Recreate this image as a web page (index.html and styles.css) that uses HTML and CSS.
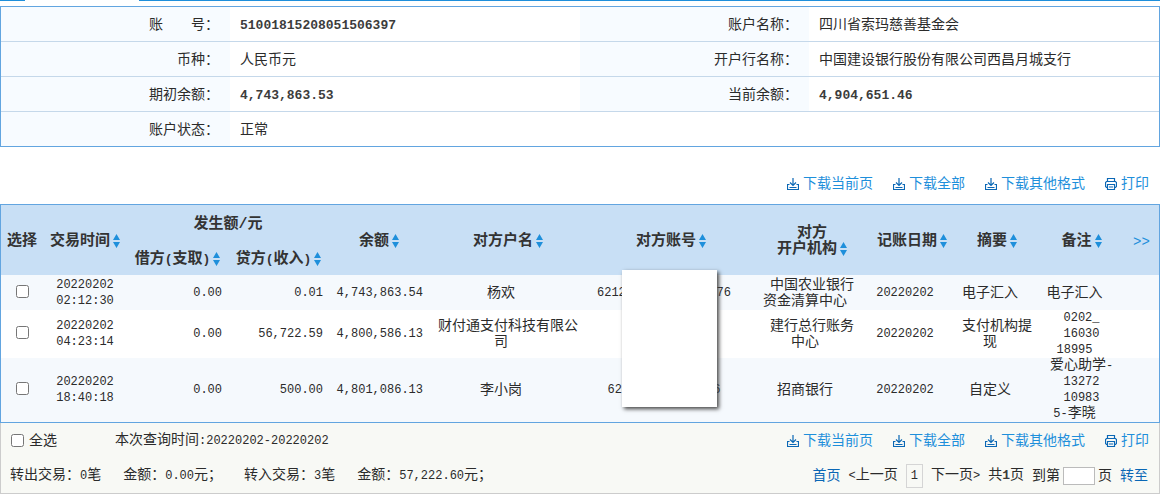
FILE: index.html
```html
<!DOCTYPE html>
<html lang="zh-CN">
<head>
<meta charset="utf-8">
<title>账户明细</title>
<link rel="stylesheet" href="styles.css">
</head>
<body>
<svg class="defs" aria-hidden="true">
  <symbol id="sort" viewBox="0 0 7 14"><path d="M3.500 0L7 6H0zM0 8h7L3.500 14z" fill="#1e8fdb"/></symbol>
  <symbol id="down" viewBox="0 0 12 12"><path d="M6 0v7.500M3 4.500l3 3 3-3M2.500 6.500h-2v5h11v-5h-2M2.500 9.500h7" fill="none" stroke="#0a67b5" stroke-width="1.200"/></symbol>
  <symbol id="print" viewBox="0 0 12 12"><path d="M2.500 3.500v-3h7v3M2.500 9.500h-1l-1-1v-4l1-1h9l1 1v4l-1 1h-1M2.500 6.500h7v5h-7zM4 9h4" fill="none" stroke="#0a67b5" stroke-width="1.200"/></symbol>
</svg>

<div class="tabline"><span class="tabline-start"></span><span class="tabline-rest"></span></div>

<table class="info">
  <colgroup><col class="c-label"><col class="c-value"><col class="c-label"><col class="c-value"></colgroup>
  <tr><th>账&#12288;&#12288;号：</th><td><b>51001815208051506397</b></td><th>账户名称：</th><td>四川省索玛慈善基金会</td></tr>
  <tr><th>币种：</th><td>人民币元</td><th>开户行名称：</th><td>中国建设银行股份有限公司西昌月城支行</td></tr>
  <tr><th>期初余额：</th><td><b>4,743,863.53</b></td><th>当前余额：</th><td><b>4,904,651.46</b></td></tr>
  <tr><th>账户状态：</th><td colspan="3">正常</td></tr>
</table>

<nav class="tools tools-top">
  <a href="#"><svg><use href="#down"/></svg>下载当前页</a>
  <a href="#"><svg><use href="#down"/></svg>下载全部</a>
  <a href="#"><svg><use href="#down"/></svg>下载其他格式</a>
  <a href="#"><svg><use href="#print"/></svg>打印</a>
</nav>

<table class="ledger">
  <colgroup><col class="w-pick"><col class="w-time"><col class="w-amount"><col class="w-amount"><col class="w-balance"><col class="w-name"><col class="w-account"><col class="w-bank"><col class="w-date"><col class="w-brief"><col class="w-note"><col class="w-more"></colgroup>
  <thead>
    <tr>
      <th rowspan="2">选择</th>
      <th rowspan="2"><button>交易时间<svg><use href="#sort"/></svg></button></th>
      <th colspan="2">发生额/元</th>
      <th rowspan="2"><button>余额<svg><use href="#sort"/></svg></button></th>
      <th rowspan="2"><button>对方户名<svg><use href="#sort"/></svg></button></th>
      <th rowspan="2"><button>对方账号<svg><use href="#sort"/></svg></button></th>
      <th rowspan="2">对方<br><button>开户机构<svg><use href="#sort"/></svg></button></th>
      <th rowspan="2"><button>记账日期<svg><use href="#sort"/></svg></button></th>
      <th rowspan="2"><button>摘要<svg><use href="#sort"/></svg></button></th>
      <th rowspan="2"><button>备注<svg><use href="#sort"/></svg></button></th>
      <th rowspan="2"><button class="more">&gt;&gt;</button></th>
    </tr>
    <tr>
      <th><button><span>借方<span class="paren">(</span>支取<span class="paren">)</span></span><svg><use href="#sort"/></svg></button></th>
      <th><button><span>贷方<span class="paren">(</span>收入<span class="paren">)</span></span><svg><use href="#sort"/></svg></button></th>
    </tr>
  </thead>
  <tbody>
    <tr>
      <td><input type="checkbox" aria-label="选择"></td>
      <td class="num">20220202<br>02:12:30</td>
      <td class="num amount">0.00</td>
      <td class="num amount">0.01</td>
      <td class="num amount">4,743,863.54</td>
      <td><span class="tail">杨欢</span></td>
      <td class="num account"><span class="masked masked-long"><span>6212</span><span>76</span></span><span class="cover"></span></td>
      <td>中国农业银行<br><span class="tail">资金清算中心</span></td>
      <td class="num"><span class="tail">20220202</span></td>
      <td><span class="tail">电子汇入</span></td>
      <td><span class="tail">电子汇入</span></td>
      <td></td>
    </tr>
    <tr>
      <td><input type="checkbox" aria-label="选择"></td>
      <td class="num">20220202<br>04:23:14</td>
      <td class="num amount">0.00</td>
      <td class="num amount">56,722.59</td>
      <td class="num amount">4,800,586.13</td>
      <td>财付通支付科技有限公<br><span class="tail">司</span></td>
      <td></td>
      <td>建行总行账务<br><span class="tail">中心</span></td>
      <td class="num"><span class="tail">20220202</span></td>
      <td>支付机构提<br><span class="tail">现</span></td>
      <td class="num">0202_<br>16030<br><span class="tail">18995</span></td>
      <td></td>
    </tr>
    <tr>
      <td><input type="checkbox" aria-label="选择"></td>
      <td class="num">20220202<br>18:40:18</td>
      <td class="num amount">0.00</td>
      <td class="num amount">500.00</td>
      <td class="num amount">4,801,086.13</td>
      <td><span class="tail">李小岗</span></td>
      <td class="num"><span class="masked masked-short"><span>62</span><span>6</span></span></td>
      <td><span class="tail">招商银行</span></td>
      <td class="num"><span class="tail">20220202</span></td>
      <td><span class="tail">自定义</span></td>
      <td class="num"><span class="cjk">爱心助学</span>-<br>13272<br>10983<br><span class="tail">5-<span class="cjk">李晓</span></span></td>
      <td></td>
    </tr>
  </tbody>
</table>

<footer class="foot">
  <div class="foot-row">
    <label class="all"><input type="checkbox">全选</label>
    <span class="period">本次查询时间<span class="num">:20220202-20220202</span></span>
    <nav class="tools">
      <a href="#"><svg><use href="#down"/></svg>下载当前页</a>
      <a href="#"><svg><use href="#down"/></svg>下载全部</a>
      <a href="#"><svg><use href="#down"/></svg>下载其他格式</a>
      <a href="#"><svg><use href="#print"/></svg>打印</a>
    </nav>
  </div>
  <div class="foot-row">
    <div class="totals">
      <span>转出交易：<span class="num">0</span>笔</span>
      <span>金额：<span class="num">0.00</span>元；</span>
      <span>转入交易：<span class="num">3</span>笔</span>
      <span>金额：<span class="num">57,222.60</span>元；</span>
    </div>
    <nav class="pager">
      <a href="#">首页</a>
      <span><span class="num">&lt;</span>上一页</span>
      <span class="page num">1</span>
      <span>下一页<span class="num">&gt;</span></span>
      <span>共<b>1</b>页</span>
      <label>到第<input type="text" aria-label="页码">页</label>
      <a href="#">转至</a>
    </nav>
  </div>
</footer>
</body>
</html>
```
FILE: styles.css
```css
* { box-sizing: border-box; }
body {
  margin: 0;
  background: #fff;
  color: #2b2b2b;
  font: 14px/16px "Liberation Mono", "Noto Sans CJK SC", monospace;
}
.defs { display: none; }
table { width: 100%; table-layout: fixed; border-collapse: separate; border-spacing: 0; }
th, td { padding: 0; }
a { color: #1e8fdb; text-decoration: none; }
button { padding: 0; border: 0; background: none; color: inherit; font: inherit; white-space: nowrap; cursor: pointer; }
input[type="checkbox"] { width: 13px; height: 13px; margin: 0; }
.num { font-size: 12px; }
.cjk { font-size: 14px; line-height: 14px; }
b { font-size: 13px; color: #3c3c3c; }

.tabline { display: flex; gap: 114px; height: 1px; margin-bottom: 5px; }
.tabline-start { width: 25px; background: #1e8fdb; }
.tabline-rest { flex: 1; background: #1e8fdb; }

.info { border: 1px solid #62a5e0; }
.c-label { width: 229px; }
.c-value { width: 350px; }
.info th, .info td { height: 35px; padding-top: 2px; border-bottom: 1px solid #c5d8ea; }
.info tr:last-child th, .info tr:last-child td { height: 34px; border-bottom: 0; }
.info th { padding-right: 11px; background: #f7fbff; font-weight: 400; text-align: right; }
.info td { padding-left: 10px; text-align: left; }

.tools { display: flex; justify-content: flex-end; gap: 20px; padding-right: 10px; }
.tools a { display: flex; align-items: center; gap: 4px; }
.tools svg { width: 12px; height: 12px; }
.tools-top { padding: 29px 11px 12px 0; }

.ledger { border: 1px solid #62a5e0; }
.w-pick { width: 42px; }
.w-time { width: 84px; }
.w-amount { width: 101px; }
.w-balance { width: 100px; }
.w-name { width: 158px; }
.w-account { width: 168px; }
.w-bank { width: 114px; }
.w-date { width: 86px; }
.w-brief { width: 84px; }
.w-note { width: 85px; }
.w-more { width: 35px; }
.ledger th { height: 35px; padding-top: 4px; background: #c8dff5; color: #333; font-size: 15px; font-weight: 700; text-align: center; }
.ledger td { height: 35px; text-align: center; }
.ledger tbody tr:nth-child(odd) { background: #f5f9fd; }
.ledger tbody td:first-child { padding-bottom: 3px; }
.ledger td input { display: block; margin: 0 auto; }
.ledger th button { display: inline-flex; align-items: center; gap: 3px; vertical-align: top; }
.ledger th svg { width: 7px; height: 14px; margin-bottom: 2px; }
.ledger .paren { font-size: 13px; }
.ledger th .more { color: #1e8fdb; font-size: 14px; font-weight: 400; }
.ledger .amount { padding-right: 6px; text-align: right; }
.tail { padding-right: 14px; }
.account { position: relative; }
.masked { display: flex; justify-content: space-between; margin: 0 auto; }
.masked-long { width: 148px; padding-right: 14px; }
.masked-short { width: 127px; padding-right: 14px; }
.cover {
  position: absolute;
  top: -5px;
  left: 35px;
  width: 95px;
  height: 137px;
  background: #fff;
  box-shadow: 2px 2px 4px #444;
}

.foot { border: 1px solid #ccc; border-top: 0; background: #f8f9f5; }
.foot-row { display: flex; align-items: center; height: 35px; padding-left: 9px; }
.foot-row .tools, .pager { margin-left: auto; }
.all { display: flex; align-items: center; gap: 5px; width: 105px; padding-left: 1px; }
.totals { display: flex; gap: 22px; }
.pager { display: flex; align-items: center; gap: 8px; padding-right: 11px; }
.pager a { color: #0a67b5; }
.page { padding: 3px 4px; border: 1px solid #d5d5d5; }
.pager label { display: flex; align-items: center; gap: 3px; }
.pager input { width: 32px; height: 18px; padding: 0 2px; border: 1px solid #bbb; background: #fff; font: inherit; }
```
